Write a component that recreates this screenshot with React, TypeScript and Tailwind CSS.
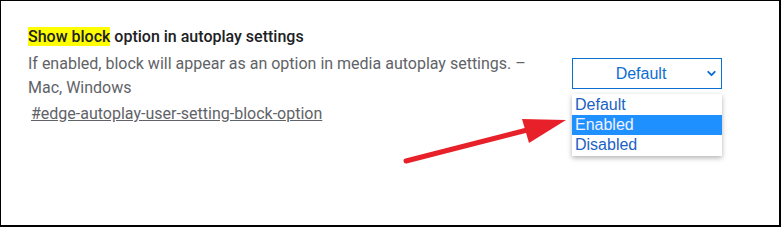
import { ChevronDown } from "lucide-react"

const options = ["Default", "Enabled", "Disabled"]

export default function App() {
  return (
    <div className="relative h-[228px] w-[782px] bg-white font-['Roboto',sans-serif]">
      <div className="relative flex h-[227px] w-[781px] border border-r-2 border-b-2 border-black pl-[27px] pt-[26px]">
        <div className="w-[520px]">
          <h3 className="text-[16px] leading-[20px] font-medium text-[#202124]">
            <span className="bg-[#ffff00]">Show block</span> option in autoplay settings
          </h3>
          <p className="mt-[5px] text-[16px] leading-[24px] text-[#5f6368]">
            If enabled, block will appear as an option in media autoplay settings. – Mac, Windows
          </p>
          <a className="mt-[2px] ml-[3px] block text-[16px] leading-[24px] text-[#5f6368] underline">
            #edge-autoplay-user-setting-block-option
          </a>
        </div>
        <div className="relative ml-auto mr-[57px] mt-[31px] h-[31px] w-[150px]">
          <div className="flex h-full w-full items-center justify-center border border-[#0b6ed1] pr-[12px] font-['Liberation_Sans',sans-serif] text-[16px] text-[#0b6ed1]">
            Default
            <ChevronDown className="absolute right-[4px] top-[9px] h-[13px] w-[13px]" strokeWidth={3.5} />
          </div>
          <ul className="absolute left-0 top-[36px] w-[150px] bg-white py-[1px] font-['Liberation_Sans',sans-serif] text-[16px] leading-[20px] text-[#1a62c4] shadow-[0_2px_5px_rgba(0,0,0,0.3)]">
            {options.map((o) => (
              <li key={o} className={o === "Enabled" ? "bg-[#1e90ff] pl-[3px] text-[#f4f0ff]" : "pl-[3px]"}>
                {o}
              </li>
            ))}
          </ul>
        </div>
      </div>
      <svg className="absolute left-0 top-0" width="782" height="228" viewBox="0 0 782 228">
        <line x1="406" y1="161" x2="535" y2="128" stroke="#e8202a" strokeWidth="5" strokeLinecap="round" />
        <polygon points="566,120 522,119 529,143" fill="#e8202a" />
      </svg>
    </div>
  )
}
